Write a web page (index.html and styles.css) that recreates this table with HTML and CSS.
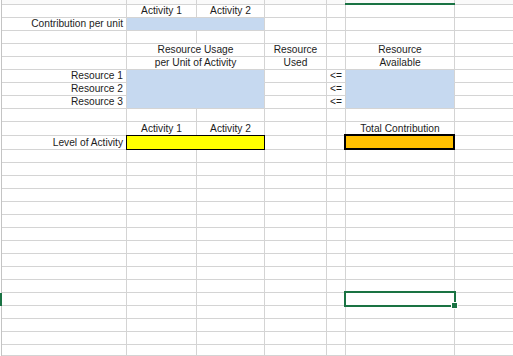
FILE: index.html
```html
<!DOCTYPE html>
<html>
<head>
<meta charset="utf-8">
<link rel="stylesheet" href="styles.css">
</head>
<body>
<div class="sheet">
  <div class="row head"><div class="edge"></div><div></div><div></div><div></div><div></div><div></div><div class="selcol"></div><div></div></div>
  <div class="row"><div class="edge"></div><div></div><div>Activity 1</div><div>Activity 2</div><div></div><div></div><div></div><div></div></div>
  <div class="row"><div class="edge"></div><div class="r">Contribution per unit</div><div class="span2 blue"></div><div></div><div></div><div></div><div></div></div>
  <div class="row"><div class="edge"></div><div></div><div></div><div></div><div></div><div></div><div></div><div></div></div>
  <div class="row"><div class="edge"></div><div></div><div class="span2">Resource Usage</div><div>Resource</div><div></div><div>Resource</div><div></div></div>
  <div class="row"><div class="edge"></div><div></div><div class="span2">per Unit of Activity</div><div>Used</div><div></div><div>Available</div><div></div></div>
  <div class="row"><div class="edge"></div><div class="r">Resource 1</div><div class="span2 blue cont"></div><div></div><div>&lt;=</div><div class="blue cont"></div><div></div></div>
  <div class="row"><div class="edge"></div><div class="r">Resource 2</div><div class="span2 blue cont"></div><div></div><div>&lt;=</div><div class="blue cont"></div><div></div></div>
  <div class="row"><div class="edge"></div><div class="r">Resource 3</div><div class="span2 blue"></div><div></div><div>&lt;=</div><div class="blue"></div><div></div></div>
  <div class="row"><div class="edge"></div><div></div><div></div><div></div><div></div><div></div><div></div><div></div></div>
  <div class="row tall"><div class="edge"></div><div></div><div>Activity 1</div><div>Activity 2</div><div></div><div></div><div>Total Contribution</div><div></div></div>
  <div class="row tall"><div class="edge"></div><div class="r">Level of Activity</div><div class="span2 yellow"></div><div></div><div></div><div class="orange"></div><div></div></div>
  <div class="row"><div class="edge"></div><div></div><div></div><div></div><div></div><div></div><div></div><div></div></div>
  <div class="row"><div class="edge"></div><div></div><div></div><div></div><div></div><div></div><div></div><div></div></div>
  <div class="row"><div class="edge"></div><div></div><div></div><div></div><div></div><div></div><div></div><div></div></div>
  <div class="row"><div class="edge"></div><div></div><div></div><div></div><div></div><div></div><div></div><div></div></div>
  <div class="row"><div class="edge"></div><div></div><div></div><div></div><div></div><div></div><div></div><div></div></div>
  <div class="row"><div class="edge"></div><div></div><div></div><div></div><div></div><div></div><div></div><div></div></div>
  <div class="row"><div class="edge"></div><div></div><div></div><div></div><div></div><div></div><div></div><div></div></div>
  <div class="row"><div class="edge"></div><div></div><div></div><div></div><div></div><div></div><div></div><div></div></div>
  <div class="row"><div class="edge"></div><div></div><div></div><div></div><div></div><div></div><div></div><div></div></div>
  <div class="row"><div class="edge"></div><div></div><div></div><div></div><div></div><div></div><div></div><div></div></div>
  <div class="row"><div class="edge"></div><div></div><div></div><div></div><div></div><div></div><div></div><div></div></div>
  <div class="row"><div class="edge sel"></div><div></div><div></div><div></div><div></div><div></div><div class="active"><span class="handle"></span></div><div></div></div>
  <div class="row"><div class="edge"></div><div></div><div></div><div></div><div></div><div></div><div></div><div></div></div>
  <div class="row"><div class="edge"></div><div></div><div></div><div></div><div></div><div></div><div></div><div></div></div>
  <div class="row"><div class="edge"></div><div></div><div></div><div></div><div></div><div></div><div></div><div></div></div>
  <div class="row last"><div class="edge"></div><div></div><div></div><div></div><div></div><div></div><div></div><div></div></div>
</div>
</body>
</html>
```
FILE: styles.css
```css
html, body {
  margin: 0;
  padding: 0;
  background: #ffffff;
}
body {
  width: 513px;
  height: 356px;
  overflow: hidden;
  font-family: "Liberation Sans", Arial, sans-serif;
  font-size: 10.2px;
  color: #1c1c1c;
}
.sheet {
  display: flex;
  flex-direction: column;
  height: 356px;
}
.row {
  display: grid;
  grid-template-columns: 2px 125px 70px 68px 62px 19px 109px 1fr;
  height: 13px;
  flex: none;
}
.row.tall { height: 14px; }
.row.head { height: 5px; background: #fafafa; }
.row.last { flex: 1; }
.row > div {
  position: relative;
  box-sizing: border-box;
  border-right: 1px solid #d4d4d4;
  border-bottom: 1px solid #d4d4d4;
  line-height: 12px;
  white-space: nowrap;
  text-align: center;
}
.row.tall > div { line-height: 13px; }
.row > div:last-child { border-right: 0; }
.row > .edge {
  border-bottom: 0;
  border-right: 1px solid #c4c4c4;
  background: #ffffff;
}
.row > .edge.sel {
  background: #1a7343;
  border-right-color: #1a7343;
}
.row > .r {
  text-align: right;
  padding-right: 3px;
}
.span2 { grid-column: span 2; }
.row > .blue { background: #c6d9f0; }
.row > .blue.cont { border-bottom-color: #c6d9f0; }
.row > .yellow { background: #ffff00; }
.yellow::after {
  content: "";
  position: absolute;
  left: -1px;
  top: -1px;
  width: 139px;
  height: 15px;
  box-sizing: border-box;
  border: 1px solid #000000;
  z-index: 2;
}
.row > .orange { background: #ffc000; }
.orange::after {
  content: "";
  position: absolute;
  left: -2px;
  top: -2px;
  width: 111px;
  height: 16px;
  box-sizing: border-box;
  border: 2px solid #000000;
  z-index: 2;
}
.selcol::after {
  content: "";
  position: absolute;
  left: -1px;
  right: -1px;
  bottom: -1px;
  height: 2px;
  background: #1a7343;
}
.active::after {
  content: "";
  position: absolute;
  left: -2px;
  top: -2px;
  width: 112px;
  height: 16px;
  box-sizing: border-box;
  border: 2px solid #1a7343;
  z-index: 2;
}
.handle {
  position: absolute;
  right: -4px;
  bottom: -4px;
  width: 7px;
  height: 7px;
  box-sizing: border-box;
  border: 1px solid #ffffff;
  background: #1a7343;
  z-index: 3;
}
```
